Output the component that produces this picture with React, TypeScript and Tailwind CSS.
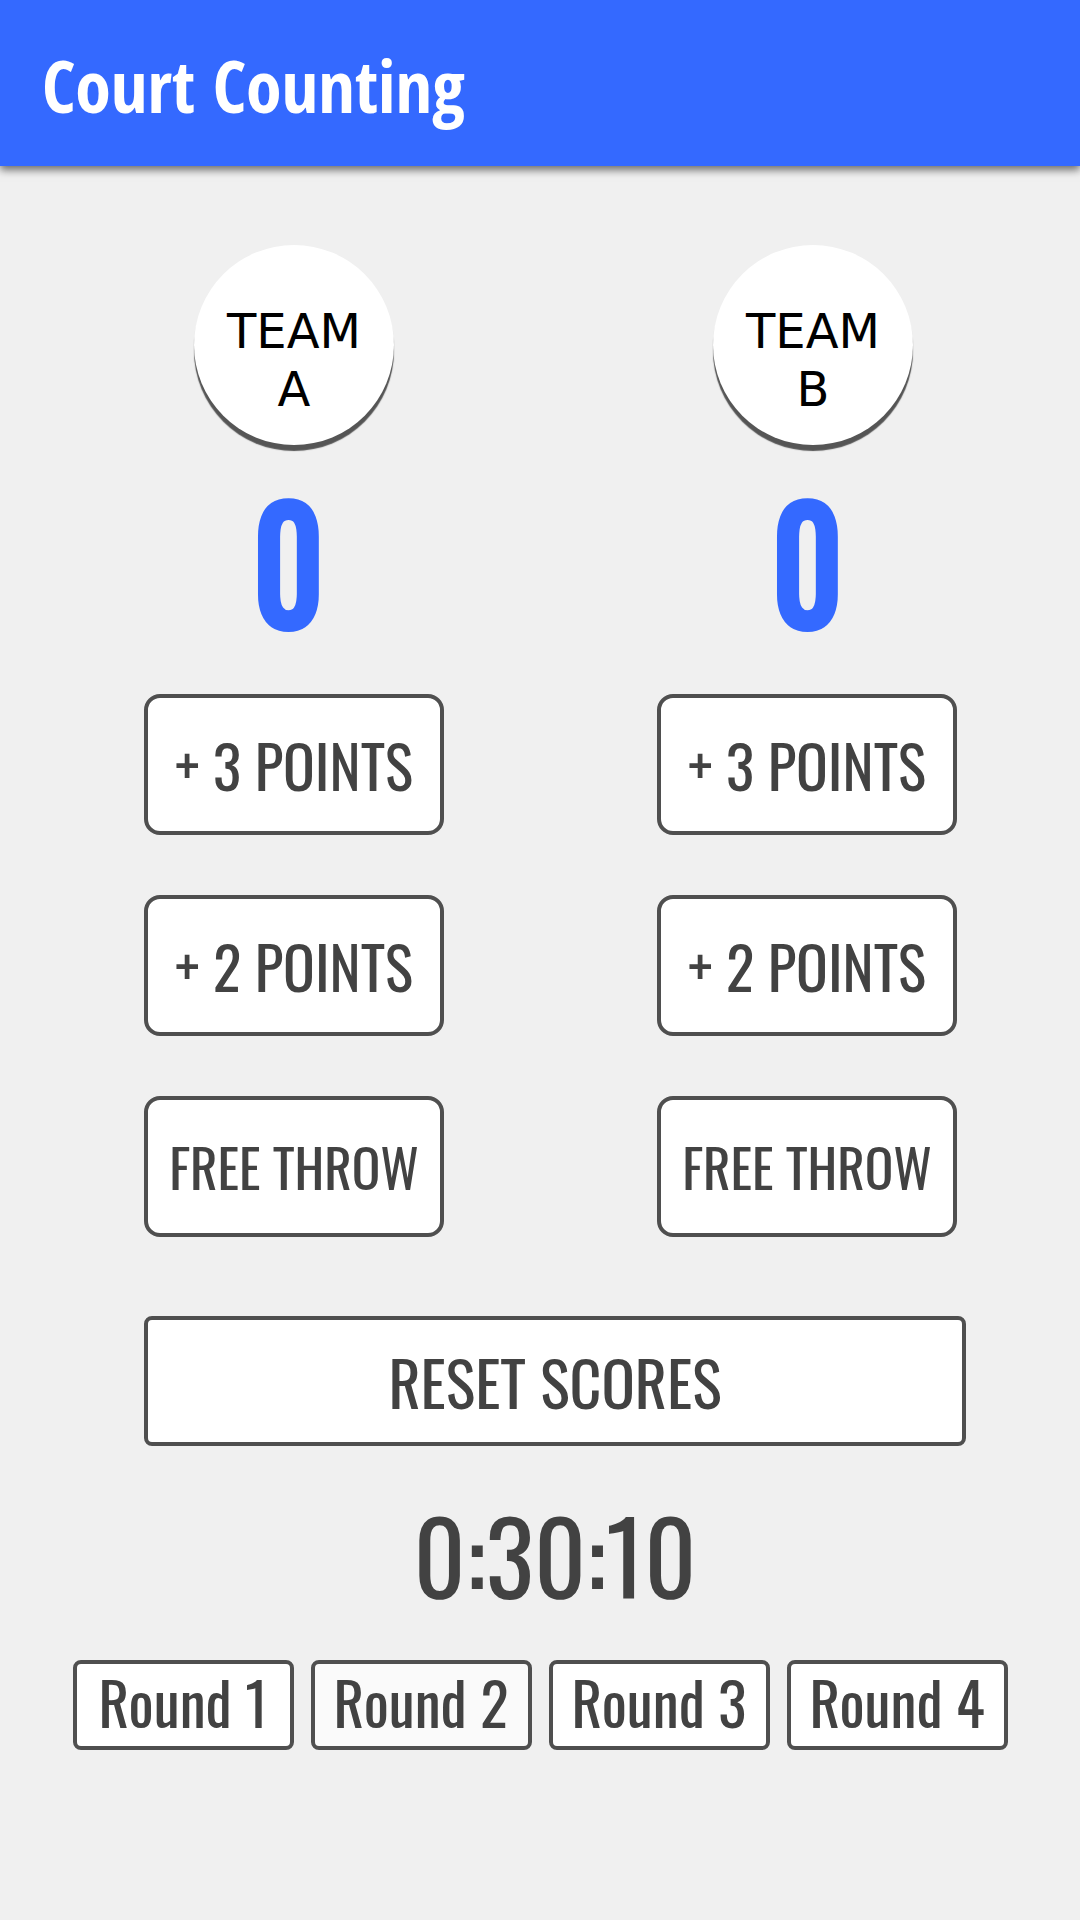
import React, { useState } from 'react';

const cond = "font-['Oswald','Roboto_Condensed',sans-serif]";

const ScoreButton: React.FC<{ label: string; size: string; onClick: () => void }> = ({ label, size, onClick }) => (
  <button
    onClick={onClick}
    className={`flex h-[141px] w-[300px] items-center justify-center rounded-[16px] border-4 border-[#4f4f4f] bg-white text-[#424242] ${cond} ${size} leading-none whitespace-nowrap`}
  >
    {label}
  </button>
);

const TeamColumn: React.FC<{
  name: string;
  score: number;
  badgeOffset?: string;
  scoreOffset?: string;
  onAdd: (n: number) => void;
}> = ({ name, score, badgeOffset = '', scoreOffset = '', onAdd }) => (
  <div className="flex w-[300px] flex-col items-center">
    <div
      className={`flex h-[200px] w-[200px] flex-col items-center justify-center rounded-full bg-white pt-[30px] shadow-[0_6px_1px_#555] font-['DejaVu_Sans',sans-serif] text-[48px] leading-[58px] text-black ${badgeOffset}`}
    >
      <span>TEAM</span>
      <span>{name}</span>
    </div>
    <div className={`mt-[13px] h-[210px] ${cond} text-[160px] font-semibold leading-[200px] text-[#3469ff] ${scoreOffset}`}>
      {/* the original digit is a touch narrower than this Oswald build */}
      <span className="inline-block scale-x-[0.88]">{score}</span>
    </div>
    <div className="mt-[26px] flex flex-col gap-[60px]">
      <ScoreButton label="+ 3 POINTS" size="text-[59px]" onClick={() => onAdd(3)} />
      <ScoreButton label="+ 2 POINTS" size="text-[59px]" onClick={() => onAdd(2)} />
      <ScoreButton label="FREE THROW" size="text-[53px]" onClick={() => onAdd(1)} />
    </div>
  </div>
);

export default function App() {
  const [scoreA, setScoreA] = useState(0);
  const [scoreB, setScoreB] = useState(0);

  return (
    <div className="min-h-[1920px] bg-[#f0f0f0]">
      <header className="relative z-10 flex h-[166px] items-center bg-[#3469ff] px-[42px] pt-[4px] shadow-[0_4px_8px_rgba(0,0,0,0.55)]">
        <h1 className="font-['Open_Sans_Condensed','Liberation_Sans',sans-serif] text-[72px] font-bold text-white">
          Court Counting
        </h1>
      </header>

      <main className="pl-[144px] pr-[114px] pt-[79px]">
        <div className="flex gap-[213px]">
          <TeamColumn name="A" score={scoreA} scoreOffset="mr-[12px]" onAdd={(n) => setScoreA(scoreA + n)} />
          <TeamColumn name="B" score={scoreB} badgeOffset="ml-[12px]" onAdd={(n) => setScoreB(scoreB + n)} />
        </div>

        <button
          onClick={() => {
            setScoreA(0);
            setScoreB(0);
          }}
          className={`mt-[79px] flex h-[130px] w-full items-center justify-center rounded-[8px] border-4 border-[#4f4f4f] bg-white ${cond} text-[62px] leading-none text-[#424242]`}
        >
          RESET SCORES
        </button>

        <div className={`mt-[38px] flex justify-center ${cond} text-[101px] leading-[140px] text-[#424242]`}>
          0:30:10
        </div>
      </main>

      <div className="mt-[36px] flex justify-center gap-[17px]">
        {[1, 2, 3, 4].map((r) => (
          <button
            key={r}
            className={`flex h-[90px] w-[221px] items-center justify-center rounded-[8px] border-4 border-[#4f4f4f] pb-[8px] ${
              r === 2 ? 'bg-[#fafafa]' : 'bg-white'
            } ${cond} text-[59px] leading-none text-[#424242]`}
          >
            Round {r}
          </button>
        ))}
      </div>
    </div>
  );
}
